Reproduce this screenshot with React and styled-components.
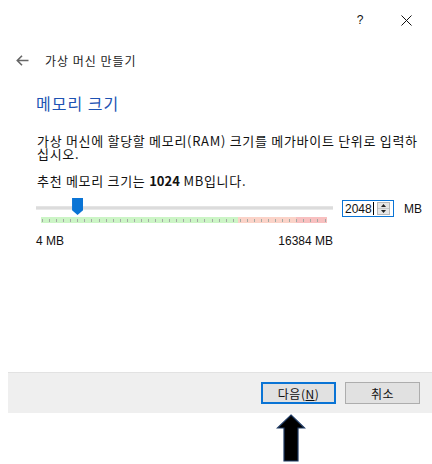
import React from 'react'
import styled, { createGlobalStyle } from 'styled-components'

const TICKS = 41

function App() {
  const min = 4
  const max = 16384
  const value = 2048
  const pct = ((value - min) / (max - min)) * 100

  return (
    <>
      <GlobalStyle />
      <Page>
        <TitleBar>
          <CaptionButton>?</CaptionButton>
          <CaptionButton>
            <svg width="11" height="11" viewBox="0 0 11 11">
              <path d="M0.5 0.5 L10.5 10.5 M10.5 0.5 L0.5 10.5" stroke="#111" strokeWidth="1" fill="none" />
            </svg>
          </CaptionButton>
        </TitleBar>

        <BackRow>
          <svg width="13" height="11" viewBox="0 0 13 11">
            <path d="M6 0.8 L1.3 5.5 L6 10.2 M1.3 5.5 H12.5" stroke="#666" strokeWidth="1.6" fill="none" />
          </svg>
          <WizardTitle>가상 머신 만들기</WizardTitle>
        </BackRow>

        <Main>
          <Heading>메모리 크기</Heading>
          <Paragraph $gap={14}>
            가상 머신에 할당할 메모리(RAM) 크기를 메가바이트 단위로 입력하십시오.
          </Paragraph>
          <Paragraph>
            추천 메모리 크기는 <b>1024</b> MB입니다.
          </Paragraph>

          <SliderRow>
            <SliderCol>
              <Track>
                <Thumb style={{ left: `calc(${pct}% + 5px - 6px)` }} />
              </Track>
              <Scale>
                <Ticks>
                  {Array.from({ length: TICKS }).map((_, i) => (
                    <Tick key={i} />
                  ))}
                </Ticks>
              </Scale>
              <Labels>
                <span>4 MB</span>
                <span>16384 MB</span>
              </Labels>
            </SliderCol>
            <SpinBox>
              <SpinText>
                2048<Caret />
              </SpinText>
              <SpinButtons>
                <SpinArrow>
                  <svg width="5" height="3" viewBox="0 0 5 3"><path d="M0 3 L2.5 0 L5 3 Z" fill="#222" /></svg>
                </SpinArrow>
                <SpinArrow>
                  <svg width="5" height="3" viewBox="0 0 5 3"><path d="M0 0 L2.5 3 L5 0 Z" fill="#222" /></svg>
                </SpinArrow>
              </SpinButtons>
            </SpinBox>
            <Unit>MB</Unit>
          </SliderRow>
        </Main>

        <Footer>
          <Button $primary>다음(<u>N</u>)</Button>
          <Button>취소</Button>
        </Footer>

        <ArrowArea>
          <svg width="30" height="48" viewBox="0 0 30 48">
            <path d="M15 1 L28.5 14 L22 14 L22 47 L8 47 L8 14 L1.5 14 Z" fill="#000" stroke="#1f3a63" strokeWidth="1.2" />
          </svg>
        </ArrowArea>
      </Page>
    </>
  )
}

export default App

// #region styles
const GlobalStyle = createGlobalStyle`
  html, body {
    margin: 0;
    padding: 0;
    background: #fff;
  }
  body {
    font-family: "Noto Sans CJK KR", "Liberation Sans", sans-serif;
    color: #111;
  }
`

const Page = styled.div`
  width: 432px;
  height: 464px;
  display: flex;
  flex-direction: column;
  overflow: hidden;
`

const TitleBar = styled.div`
  height: 40px;
  display: flex;
  justify-content: flex-end;
  padding-right: 3px;
`

const CaptionButton = styled.div`
  width: 46px;
  display: flex;
  align-items: center;
  justify-content: center;
  font-family: "Liberation Sans", sans-serif;
  font-size: 12px;
  color: #111;
`

const BackRow = styled.div`
  height: 40px;
  display: flex;
  align-items: center;
  padding-left: 16px;
  gap: 16px;
`

const WizardTitle = styled.span`
  font-size: 12px;
  letter-spacing: 1px;
  color: #222;
`

const Main = styled.div`
  flex: 1;
  padding: 14px 10px 0 36px;
`

const Heading = styled.div`
  font-size: 16px;
  line-height: 19px;
  letter-spacing: 1px;
  color: #1d52b3;
  margin-bottom: 21px;
`

const Paragraph = styled.p`
  margin: 0 0 ${p => p.$gap || 0}px;
  padding-left: 1px;
  font-size: 13px;
  line-height: 13px;
  letter-spacing: 0.7px;
  b {
    font-weight: bold;
    letter-spacing: 0;
  }
`

const SliderRow = styled.div`
  margin-top: 11px;
  display: flex;
  align-items: flex-start;
`

const SliderCol = styled.div`
  flex-shrink: 0;
  width: 297px;
  padding-top: 8px;
`

const Track = styled.div`
  position: relative;
  height: 2px;
  background: #dcdcdc;
  border-top: 1px solid #e4e4e4;
  border-bottom: 1px solid #e9e9e9;
`

const Thumb = styled.div`
  position: absolute;
  top: -9px;
  width: 11px;
  height: 17px;
  background: #0a74d5;
  clip-path: polygon(0 0, 100% 0, 100% 72%, 50% 100%, 0 72%);
`

const Scale = styled.div`
  margin: 7px 6px 0 5px;
  height: 6px;
  background: linear-gradient(
    to right,
    #ccf5c6 0%,
    #ccf5c6 69%,
    #fbd3c8 69%,
    #fbd3c8 89%,
    #f8c0c0 89%,
    #f8c0c0 100%
  );
  display: flex;
  align-items: center;
`

const Ticks = styled.div`
  flex: 1;
  display: flex;
  justify-content: space-between;
  padding: 0 1px;
`

const Tick = styled.span`
  width: 1px;
  height: 3px;
  background: #a4aaa4;
`

const Labels = styled.div`
  display: flex;
  justify-content: space-between;
  margin-top: 11px;
  font-family: "Liberation Sans", sans-serif;
  font-size: 12px;
  line-height: 14px;
  color: #111;
`

const SpinBox = styled.div`
  flex-shrink: 0;
  margin: 2px 0 0 9px;
  width: 52px;
  height: 17px;
  box-sizing: border-box;
  border: 1px solid #0a74d5;
  display: flex;
  background: #fff;
`

const SpinText = styled.div`
  flex: 1;
  display: flex;
  align-items: center;
  padding-left: 2px;
  font-family: "Liberation Sans", sans-serif;
  font-size: 12px;
  color: #111;
`

const Caret = styled.span`
  display: inline-block;
  width: 1px;
  height: 13px;
  background: #000;
  margin-left: 1px;
`

const SpinButtons = styled.div`
  width: 11px;
  margin: 1px 3px 1px 0;
  display: flex;
  flex-direction: column;
  border: 1px solid #b8b8b8;
  background: #e6e6e6;
`

const SpinArrow = styled.div`
  flex: 1;
  display: flex;
  align-items: center;
  justify-content: center;
  & + & {
    border-top: 1px solid #c8c8c8;
  }
`

const Unit = styled.span`
  flex-shrink: 0;
  margin: 3px 0 0 10px;
  font-family: "Liberation Sans", sans-serif;
  font-size: 12px;
  line-height: 17px;
  color: #111;
`

const Footer = styled.div`
  margin-left: 8px;
  height: 41px;
  box-sizing: border-box;
  background: #efefef;
  border-top: 1px solid #e2e2e2;
  display: flex;
  align-items: center;
  justify-content: flex-end;
  gap: 9px;
  padding-right: 12px;
`

const Button = styled.button`
  width: 75px;
  height: 22px;
  box-sizing: border-box;
  background: #e1e1e1;
  border: ${p => (p.$primary ? '2px solid #0a74d5' : '1px solid #adadad')};
  font-family: "Noto Sans CJK KR", sans-serif;
  font-size: 12px;
  letter-spacing: 0.5px;
  color: #111;
  padding: 0;
  u {
    text-decoration: underline;
  }
`

const ArrowArea = styled.div`
  height: 50px;
  display: flex;
  justify-content: flex-start;
  padding-left: 276px;
  padding-top: 1px;
`
// #endregion
